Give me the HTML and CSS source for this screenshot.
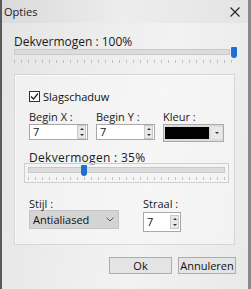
FILE: index.html
```html
<!DOCTYPE html>
<html>

<head>
    <meta charset="UTF-8">
    <title>Opties</title>
    <link rel="stylesheet" href="styles.css">
</head>

<body>
    <div class="window">
        <div class="titlebar">
            <span class="title">Opties</span>
            <svg class="close" width="10" height="10" viewBox="0 0 10 10">
                <path d="M0.5 0.5 L9.5 9.5 M9.5 0.5 L0.5 9.5" stroke="#222" stroke-width="1.1" fill="none" />
            </svg>
        </div>

        <div class="content">
            <div class="label slider-label">Dekvermogen : 100%</div>
            <div class="slider main-slider">
                <div class="track"></div>
                <div class="thumb" style="left: 217px"></div>
                <div class="ticks"></div>
            </div>

            <div class="group">
                <label class="check-row">
                    <span class="checkbox">
                        <svg width="9" height="9" viewBox="0 0 9 9">
                            <path d="M1 4.5 L3.5 7 L8 1.5" stroke="#222" stroke-width="1.2" fill="none" />
                        </svg>
                    </span>
                    Slagschaduw
                </label>

                <div class="field-row">
                    <div class="field">
                        <div class="label">Begin X :</div>
                        <div class="spin wide">
                            <span class="value">7</span>
                            <span class="arrows"><i class="up"></i><i class="down"></i></span>
                        </div>
                    </div>
                    <div class="field">
                        <div class="label">Begin Y :</div>
                        <div class="spin wide">
                            <span class="value">7</span>
                            <span class="arrows"><i class="up"></i><i class="down"></i></span>
                        </div>
                    </div>
                    <div class="field">
                        <div class="label">Kleur :</div>
                        <div class="color-pick">
                            <span class="swatch"></span>
                            <span class="drop"><i class="down"></i></span>
                        </div>
                    </div>
                </div>

                <div class="label slider-label mid-label">Dekvermogen : 35%</div>
                <div class="slider framed">
                    <div class="track"></div>
                    <div class="thumb" style="left: 56px"></div>
                    <div class="ticks"></div>
                </div>

                <div class="field-row bottom-row">
                    <div class="field">
                        <div class="label">Stijl :</div>
                        <div class="select">
                            <span>Antialiased</span>
                            <svg width="8" height="5" viewBox="0 0 8 5">
                                <path d="M0.5 0.5 L4 4 L7.5 0.5" stroke="#555" stroke-width="1" fill="none" />
                            </svg>
                        </div>
                    </div>
                    <div class="field straal">
                        <div class="label">Straal :</div>
                        <div class="spin small">
                            <span class="value">7</span>
                            <span class="arrows"><i class="up"></i><i class="down"></i></span>
                        </div>
                    </div>
                </div>
            </div>

            <div class="buttons">
                <button class="btn">Ok</button>
                <button class="btn">Annuleren</button>
            </div>
        </div>
    </div>
</body>

</html>
```

FILE: styles.css
```css
* {
    margin: 0;
    padding: 0;
    box-sizing: border-box;
}

html,
body {
    width: 251px;
    height: 289px;
    overflow: hidden;
    background: #e6e6e6;
    font-family: "Open Sans", "Noto Sans", sans-serif;
    font-size: 11px;
    color: #111;
}

.window {
    width: 251px;
    height: 289px;
    border-left: 2px solid #5a5a5a;
    border-right: 3px solid #8a8a8a;
    background: linear-gradient(100deg, #e4e4e4 0%, #eeeeee 40%, #f2f2f2 60%, #e9e9e9 100%);
    display: flex;
    flex-direction: column;
}

/* Title bar */
.titlebar {
    height: 23px;
    display: flex;
    align-items: center;
    justify-content: space-between;
    padding: 0 8px 0 2px;
    background: linear-gradient(90deg, #dadada 0%, #ededed 50%, #e4e4e4 100%);
}

.title {
    font-size: 11px;
    color: #222;
}

.close {
    margin-top: 1px;
}

.content {
    flex: 1;
    padding: 12px 14px 0 12px;
    display: flex;
    flex-direction: column;
}

.label {
    font-size: 11px;
    line-height: 14px;
    color: #1a1a1a;
}

.slider-label {
    font-size: 12px;
}

/* Sliders */
.slider {
    position: relative;
}

.slider .track {
    height: 6px;
    background: #dcdcdc;
    border: 1px solid #c9c9c9;
}

.slider .thumb {
    position: absolute;
    top: -2px;
    width: 6px;
    height: 11px;
    background: #1f6fd1;
    border-radius: 1px 1px 3px 3px;
}

.slider .ticks {
    height: 3px;
    margin-top: 5px;
    background: repeating-linear-gradient(90deg, #aaa 0 1px, transparent 1px 7px);
    opacity: 0.7;
}

.main-slider {
    width: 224px;
}

.main-slider .track {
    width: 216px;
}

/* Group box */
.group {
    margin-top: 11px;
    width: 221px;
    height: 171px;
    border: 1px solid #d6d6d6;
    box-shadow: inset 1px 1px 0 #fafafa;
    background: rgba(250, 250, 250, 0.5);
    padding: 14px 0 0 14px;
}

.check-row {
    display: flex;
    align-items: center;
    gap: 3px;
    font-size: 11px;
    height: 14px;
}

.checkbox {
    width: 11px;
    height: 11px;
    border: 1px solid #333;
    background: #fff;
    display: flex;
    align-items: center;
    justify-content: center;
}

.field-row {
    display: flex;
    gap: 8px;
    margin-top: 7px;
}

.spin {
    height: 16px;
    border: 1px solid #a8a8a8;
    background: #fff;
    display: flex;
    align-items: center;
    justify-content: space-between;
    padding-left: 3px;
}

.spin.wide {
    width: 59px;
}

.spin .value {
    font-size: 11px;
    line-height: 14px;
}

.arrows {
    width: 9px;
    height: 14px;
    margin-right: 1px;
    display: flex;
    flex-direction: column;
    justify-content: space-around;
    align-items: center;
    background: #e8e8e8;
    border: 1px solid #c8c8c8;
}

.up,
.down {
    display: block;
    width: 0;
    height: 0;
    border-left: 2px solid transparent;
    border-right: 2px solid transparent;
}

.up {
    border-bottom: 2px solid #333;
}

.down {
    border-top: 2px solid #333;
}

.color-pick {
    width: 61px;
    height: 18px;
    border: 1px solid #aaa;
    background: #dcdcdc;
    display: flex;
    align-items: stretch;
    padding: 2px 1px 2px 1px;
    gap: 2px;
}

.swatch {
    width: 44px;
    background: #000;
}

.drop {
    flex: 1;
    display: flex;
    align-items: center;
    justify-content: center;
    background: #e9e9e9;
}

.mid-label {
    margin-top: 9px;
    line-height: 13px;
    letter-spacing: 0.3px;
}

.slider.framed {
    margin-top: -1px;
    margin-left: -5px;
    width: 205px;
    height: 20px;
    border: 1px solid #cfcfcf;
    background: rgba(245, 245, 245, 0.6);
    padding: 3px 3px 0 3px;
}

.slider.framed .thumb {
    top: 1px;
}

.slider.framed .ticks {
    margin-top: 4px;
}

.bottom-row {
    margin-top: 15px;
    gap: 24px;
}

.bottom-row .label {
    line-height: 12px;
}

.select {
    width: 90px;
    height: 19px;
    background: #d4d4d4;
    border: 1px solid #c4c4c4;
    display: flex;
    align-items: center;
    justify-content: space-between;
    padding: 0 4px 0 3px;
    font-size: 11px;
}

.straal .label {
    margin-bottom: 2px;
}

.spin.small {
    width: 38px;
    height: 20px;
}

/* Buttons */
.buttons {
    display: flex;
    justify-content: flex-end;
    gap: 6px;
    margin-top: 12px;
    margin-right: -2px;
}

.btn {
    height: 17px;
    font-family: "Open Sans", "Noto Sans", sans-serif;
    font-size: 11px;
    color: #111;
    background: #e4e4e4;
    border: 1px solid #adadad;
}

.btn:first-child {
    width: 63px;
}

.btn:last-child {
    width: 58px;
}
```
